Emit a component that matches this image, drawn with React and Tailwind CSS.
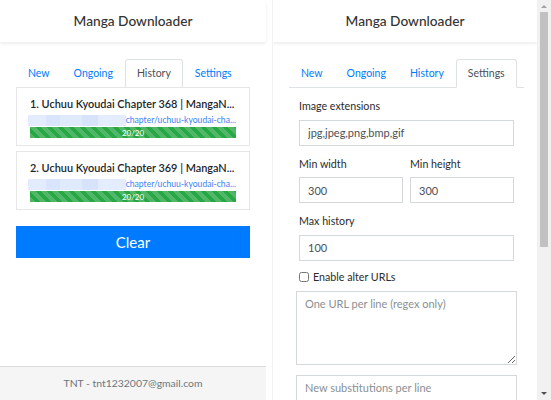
import React from 'react';

const Header = () => (
    <div className="flex h-[42px] shrink-0 items-center justify-center bg-white text-[13.7px] font-medium text-[#333] shadow-[0_2px_3px_rgba(0,0,0,0.07)]">
        Manga Downloader
    </div>
);

const Tabs = ({ active }) => (
    <div className="flex border-b border-[#dee2e6]">
        {['New', 'Ongoing', 'History', 'Settings'].map((tab) => (
            <div
                key={tab}
                className={`-mb-px flex h-[29px] items-center rounded-t-[3px] border px-[11px] text-[10.5px] ${
                    tab === active
                        ? 'border-[#dee2e6] border-b-white bg-white text-[#495057]'
                        : 'border-transparent text-[#007bff]'
                }`}
            >
                {tab}
            </div>
        ))}
    </div>
);

const HistoryCard = ({ title }) => (
    <div className="border border-[#e6e6e6] px-[13px] pt-[6px] pb-[7px]">
        <div className="whitespace-nowrap text-[10.9px] leading-[20px] font-semibold text-[#212529]">{title}</div>
        <div className="flex h-[13px] items-center">
            {/* blurred part of the url */}
            <div className="-ml-[2px] flex h-[11px] flex-1">
                <div className="w-[18px] bg-[#e3ecfd]" />
                <div className="w-[14px] bg-[#d8e5fc]" />
                <div className="w-[22px] bg-[#e0eafd]" />
                <div className="w-[16px] bg-[#d6e3fb]" />
                <div className="flex-1 bg-[#e4edfd]" />
            </div>
            <div className="text-[8.6px] leading-[13px] text-[#3b82f6]">chapter/uchuu-kyoudai-cha...</div>
        </div>
        <div className="flex h-[11px] items-center justify-center bg-[#28a745] bg-[linear-gradient(45deg,rgba(255,255,255,.18)_25%,transparent_25%,transparent_50%,rgba(255,255,255,.18)_50%,rgba(255,255,255,.18)_75%,transparent_75%,transparent)] bg-[length:11px_11px] text-[8px] leading-none text-white">
            20/20
        </div>
    </div>
);

const Field = ({ label, value, last }) => (
    <div className={last ? 'mb-[8px]' : 'mb-[10px]'}>
        <div className="mb-[5px] text-[10.7px] leading-[16px] text-[#2b2b2b]">{label}</div>
        <input
            readOnly
            value={value}
            className="h-[26px] w-full border border-[#d6d9dc] px-[8px] text-[11px] text-[#495057] outline-none"
        />
    </div>
);

const Scrollbar = () => (
    <div className="flex w-[14px] shrink-0 flex-col items-center bg-[#f1f1f1]">
        <div className="flex h-[12px] items-center justify-center">
            <div className="h-0 w-0 border-x-[3px] border-b-[3px] border-x-transparent border-b-[#a3a3a3]" />
        </div>
        <div className="h-[235px] w-[8px] bg-[#c1c1c1]" />
        <div className="flex-1" />
        <div className="flex h-[14px] items-center justify-center">
            <div className="h-0 w-0 border-x-[3px] border-t-[3px] border-x-transparent border-t-[#505050]" />
        </div>
    </div>
);

const App = () => {
    return (
        <div className="flex h-[400px] w-[551px] overflow-hidden bg-white font-['Lato',sans-serif] text-[#212529]">
            {/* Left panel - History */}
            <div className="flex w-[266px] shrink-0 flex-col">
                <Header />
                <div className="px-4 pt-[17px]">
                    <Tabs active="History" />
                    <div className="-mt-px flex flex-col gap-[5px]">
                        <HistoryCard title="1. Uchuu Kyoudai Chapter 368 | MangaN..." />
                        <HistoryCard title="2. Uchuu Kyoudai Chapter 369 | MangaN..." />
                    </div>
                    <button className="mt-4 h-[32px] w-full bg-[#007bff] text-[15px] text-white">Clear</button>
                </div>
                <div className="mt-auto flex h-[34px] items-center justify-center border-t border-[#dcdcdc] bg-[#f5f5f5] text-[10.4px] text-[#6c757d]">
                    TNT - tnt1232007@gmail.com
                </div>
            </div>

            {/* Right panel - Settings */}
            <div className="ml-[6px] flex h-[400px] flex-1 border-l border-[#f2f2f2]">
                <div className="flex-1 overflow-hidden">
                    <Header />
                    <div className="pt-[17px] pr-[13px] pl-4">
                        <Tabs active="Settings" />
                        <div className="px-[10px] pt-[10px]">
                            <Field label="Image extensions" value="jpg,jpeg,png,bmp,gif" />
                            <div className="flex gap-[7px]">
                                <div className="flex-1">
                                    <Field label="Min width" value="300" />
                                </div>
                                <div className="flex-1">
                                    <Field label="Min height" value="300" />
                                </div>
                            </div>
                            <Field label="Max history" value="100" last />
                            <label className="mb-[5px] flex h-[17px] items-center gap-[4px] text-[10.7px] text-[#2b2b2b]">
                                <input type="checkbox" className="m-0 h-[10px] w-[10px]" />
                                Enable alter URLs
                            </label>
                            <textarea
                                placeholder="One URL per line (regex only)"
                                className="-mx-[3px] mb-[10px] block h-[74px] w-[calc(100%+6px)] border border-[#d6d9dc] px-[8px] pt-[4px] text-[11px] text-[#495057] outline-none placeholder:text-[#8a8f94]"
                            />
                            <textarea
                                placeholder="New substitutions per line"
                                className="-mx-[3px] block h-[74px] w-[calc(100%+6px)] border border-[#d6d9dc] px-[8px] pt-[4px] text-[11px] text-[#495057] outline-none placeholder:text-[#8a8f94]"
                            />
                        </div>
                    </div>
                </div>
                <Scrollbar />
            </div>
        </div>
    );
};

export default App;
